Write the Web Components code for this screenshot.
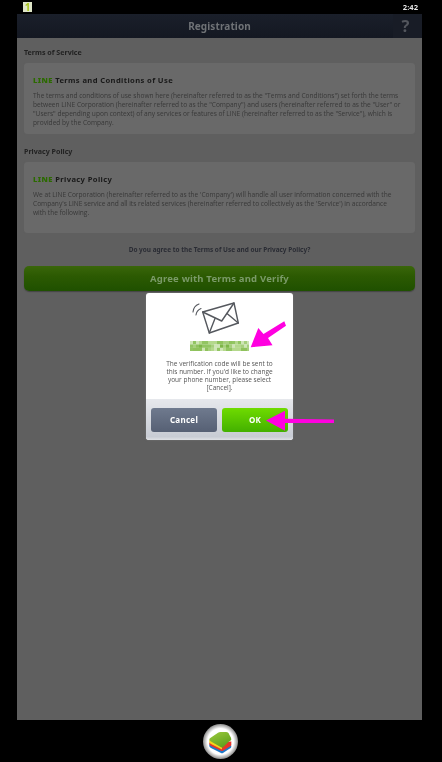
<!DOCTYPE html>
<html lang="en"><head><meta charset="utf-8"><title>Registration</title>
<style>
html,body{margin:0;padding:0;background:#000;width:442px;height:762px;overflow:hidden;font-family:"Noto Sans","Open Sans",sans-serif}
</style></head><body>
<line-screen></line-screen>
<script>
function el(name,css,html){
  customElements.define(name,class extends HTMLElement{
    constructor(){super();this.attachShadow({mode:'open'}).innerHTML='<style>'+css+'</style>'+html;}
  });
}
el('status-bar',`:host{display:flex;height:14px;padding:0 24px 0 23px;align-items:center;justify-content:space-between;background:#000}
.n{width:9px;height:10px;margin-top:-1px;background:#dfe6c8;color:#a9c61e;font:700 10px/10px "Noto Sans",sans-serif;text-align:center}
.t{color:#e4e4e4;font:700 7.6px/14px "Noto Sans",sans-serif;margin-top:-1px}`,
`<div class="n">1</div><div class="t">2:42</div>`);
el('app-header',`:host{display:flex;height:24px;background:linear-gradient(#1a1f2a,#141822)}
.t{flex:1;margin-right:-29px;text-align:center;color:#6f7276;font:700 10px/24px "Noto Sans",sans-serif;letter-spacing:.1px}
.h{width:29px;padding-right:4px;box-sizing:border-box;text-align:center;color:#53565d;font:700 16.5px/24px "Noto Sans",sans-serif;background:#181c26}`,
`<div class="t">Registration</div><div class="h">?</div>`);
el('policy-card',`:host{display:block;background:#696969;border-radius:4px;padding:11px 9px 0;box-sizing:border-box;height:71px;box-shadow:0 0 1px #666}
.h{font:700 7.6px/12px "Noto Sans",sans-serif;color:#191919;letter-spacing:.38px;margin-bottom:5px}
.h b{color:#2c6a00}
.b{font:400 6.58px/9px "Open Sans",sans-serif;color:#383838;white-space:pre-line}`,
`<div class="h"><b>LINE</b> <slot name="title"></slot></div><div class="b"><slot></slot></div>`);
el('section-label',`:host{display:block;font:700 7.1px/10px "Noto Sans",sans-serif;color:#222;height:10px}`,`<slot></slot>`);
el('agree-button',`:host{display:block;height:25px;border-radius:5px;background:linear-gradient(#3a660a,#2c5a02 40%,#1f5000);text-align:center;color:#7a9a68;font:700 9.5px/25px "Noto Sans",sans-serif;letter-spacing:.2px;box-shadow:0 1px 1px #444}`,`<slot></slot>`);
el('confirm-dialog',`:host{display:flex;flex-direction:column;position:absolute;left:146px;top:293px;width:147px;height:147px;border-radius:3px;background:#fff;overflow:hidden;box-shadow:0 0 2px #777}
.top{flex:none;height:106px;display:flex;flex-direction:column;align-items:center}
svg.m{margin-top:7px;margin-left:-9px;display:block}
svg.c{display:block;margin-top:6px;filter:blur(.5px)}
.p{margin-top:9px;width:130px;text-align:center;font:400 6.5px/8px "Open Sans",sans-serif;color:#555;white-space:pre-line}
.bar{flex:1;background:linear-gradient(#e6e8ec,#c8ccd4 92%,#dfe1e5);display:flex;gap:5px;padding:9px 5px 8px;box-sizing:border-box}
.bt{flex:1;border-radius:3px;text-align:center;font:700 8px/24px "Noto Sans",sans-serif;color:#fff;letter-spacing:.3px}
.x{background:linear-gradient(#6f7a8e,#566074)}
.o{background:linear-gradient(#6fdb00,#43b000)}`,
`<div class="top"><svg class="m" width="50" height="35" viewBox="190 300 50 35" fill="none" stroke="#55585e" stroke-width="1.4" stroke-linejoin="round" stroke-linecap="round">
<path d="M202.7 312 L234 303 L238.3 323 L209.3 333 Z"/><path d="M202.7 312 L221.7 321 L234 303"/><path d="M209.3 333 L215 318.5 M238.3 323 L227 313.5"/>
<path d="M193 312 Q193.5 306 199 304 M196 315 Q196.5 310.5 201 308.5" stroke-width="1.1"/></svg>
<svg class="c" id="c" width="59" height="10" viewBox="0 0 59 10"></svg>
<div class="p">The verification code will be sent to
this number. If you'd like to change
your phone number, please select
[Cancel].</div></div>
<div class="bar"><div class="bt x">Cancel</div><div class="bt o">OK</div></div>`);
el('bs-logo',`:host{display:block;width:35px;height:35px}svg{display:block}`,
`<svg width="35" height="35" viewBox="0 0 35 35">
<defs><radialGradient id="r"><stop offset="74%" stop-color="#fff"/><stop offset="100%" stop-color="#8c8c8c"/></radialGradient>
<linearGradient id="g" x1="0" y1="0" x2=".6" y2="1"><stop offset="0" stop-color="#9ccb3c"/><stop offset="1" stop-color="#5f9f1e"/></linearGradient></defs>
<circle cx="17.5" cy="17.5" r="17.5" fill="url(#r)"/>
<path d="M6.3 21 Q6.3 20 8 19 L28 20 L28.3 23 Q28.3 24 26 25 L20 29 Q19 29.6 18 29 L8 24 Q6.3 23 6.3 22 Z" fill="#1f78c8"/>
<path d="M6.3 18.5 L28.3 17.5 L28.3 21 Q28.3 22 26 23 L20 26.8 Q19 27.4 18 26.8 L8 22 Q6.3 21 6.3 20 Z" fill="#e5352a"/>
<path d="M6.3 16 L19 20 L19 25.3 Q18.5 25.3 18 25 L8 20 Q6.3 19 6.3 18 Z" fill="#f4d21c"/>
<path d="M6.3 15.4 Q6.3 14.4 8 13.4 L15 8.8 Q16 8 17.5 8 L23 8 Q24.5 8 25.5 9 L27 12 Q28.3 14 28.3 15.4 Q28.3 16.4 26 17.6 L20 23.2 Q19 23.9 18 23.3 L8 17.5 Q6.3 16.4 6.3 15.4 Z" fill="url(#g)"/>
</svg>`);
el('line-screen',`:host{display:block;position:relative;width:442px;height:762px;background:#000;overflow:hidden;filter:blur(.3px)}
.app{margin:0 20px 0 17px;height:706px;display:flex;flex-direction:column}
.body{flex:1;background:#5f5f5f;padding:9px 7px 0;display:flex;flex-direction:column}
policy-card{margin-top:6px}
.s2{margin-top:12px}
.q{margin-top:12px;height:10px;text-align:center;font:700 6.45px/10px "Noto Sans",sans-serif;color:#2a2c34}
agree-button{margin-top:11px}
.foot{height:42px;display:flex;justify-content:center;align-items:center;padding-right:2px;box-sizing:border-box}
.arrows{position:absolute;left:0;top:0;pointer-events:none}`,
`<status-bar></status-bar>
<div class="app"><app-header></app-header>
<div class="body">
<section-label>Terms of Service</section-label>
<policy-card><span slot="title">Terms and Conditions of Use</span>The terms and conditions of use shown here (hereinafter referred to as the "Terms and Conditions") set forth the terms
between LINE Corporation (hereinafter referred to as the "Company") and users (hereinafter referred to as the "User" or
"Users" depending upon context) of any services or features of LINE (hereinafter referred to as the "Service"), which is
provided by the Company.</policy-card>
<section-label class="s2">Privacy Policy</section-label>
<policy-card><span slot="title">Privacy Policy</span>We at LINE Corporation (hereinafter referred to as the 'Company') will handle all user information concerned with the
Company's LINE service and all its related services (hereinafter referred to collectively as the 'Service') in accordance
with the following.</policy-card>
<div class="q">Do you agree to the Terms of Use and our Privacy Policy?</div>
<agree-button>Agree with Terms and Verify</agree-button>
</div></div>
<div class="foot"><bs-logo></bs-logo></div>
<confirm-dialog></confirm-dialog>
<svg class="arrows" width="442" height="762"><g fill="#ff00e0" stroke="none">
<path d="M250.7 347.3 L258.3 328 L263.5 334 L284.3 321.3 L286 325.7 L268 338 L272.5 345.3 Z"/>
<path d="M266 420.5 L285 410.7 L285 418.7 L334 419.5 L334 423 L285 423 L285 430.7 Z"/></g></svg>`);
// mosaic for the obscured phone number
(function(){
  const s=document.querySelector('line-screen').shadowRoot.querySelector('confirm-dialog').shadowRoot.getElementById('c');
  const cols=['#8fc25c','#b4d88c','#7db648','#a6cf7c','#cfe5b6','#92c562'];
  let h='',k=7;
  for(let y=0;y<3;y++)for(let x=0;x<20;x++){k=(k*31+11)%97;
    h+=`<rect x="${x*3}" y="${y*3.4}" width="3.1" height="3.5" fill="${cols[k%6]}"/>`;}
  s.innerHTML=h;
})();
</script>
</body></html>
